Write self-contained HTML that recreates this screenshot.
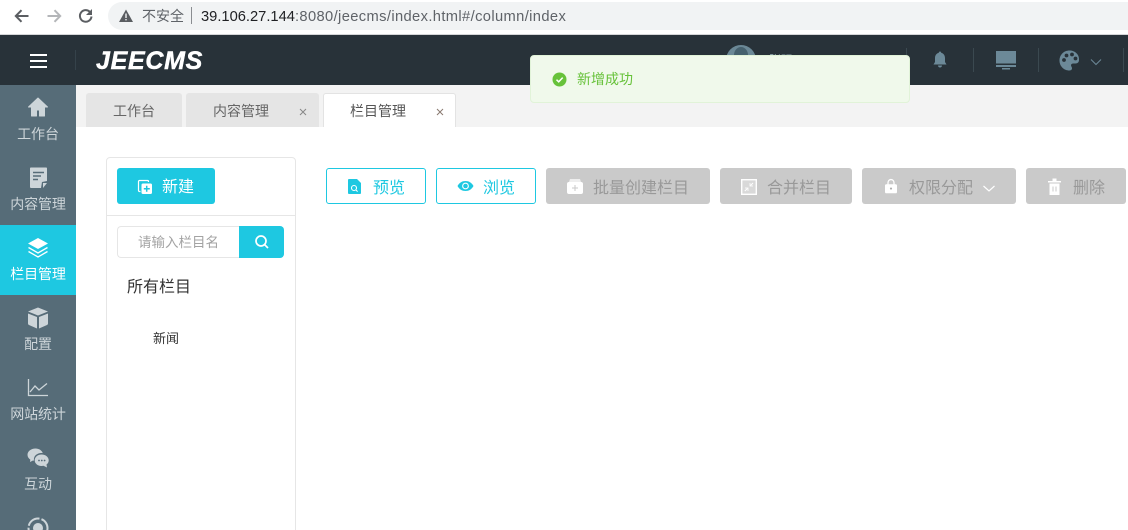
<!DOCTYPE html>
<html lang="zh">
<head>
<meta charset="utf-8">
<style>
html,body{margin:0;padding:0;width:1128px;height:530px;overflow:hidden;background:#fff}
body{position:relative;font-family:"Liberation Sans","Noto Sans CJK SC",sans-serif}
.a{position:absolute}
.t{position:absolute;white-space:nowrap;line-height:20px}
svg{position:absolute;display:block}
.nav{position:absolute;left:0;width:76px;height:70px;text-align:center}
.nav span{position:absolute;left:0;width:76px;top:40px;font-size:14px;line-height:18px;color:#cdd5d9;letter-spacing:-.1px}
.tab{position:absolute;top:93px;height:34px;background:#e5e5e5;border-radius:3px 3px 0 0;font-size:14px;color:#666}
.btn{position:absolute;top:168px;height:36px;box-sizing:border-box;border-radius:3px;font-size:16px;line-height:36px;white-space:nowrap}
.o{border:1px solid #1ec8e1;color:#1ec8e1;line-height:34px;background:#fff}
.d{background:#cacaca;color:#999}
.sep{position:absolute;top:48px;width:1px;height:24px;background:#3b4950}
</style>
</head>
<body>
<!-- browser chrome -->
<div class="a" style="left:0;top:0;width:1128px;height:34px;background:#fff;border-bottom:1px solid #d5d6d8"></div>
<svg style="left:12px;top:6px" width="20" height="20" viewBox="0 0 20 20"><path d="M16.500 10H4M9.500 4.200 3.800 10l5.700 5.800" fill="none" stroke="#5b5e62" stroke-width="2"/></svg>
<svg style="left:44px;top:6px" width="20" height="20" viewBox="0 0 20 20"><path d="M3.500 10H16M10.500 4.200 16.200 10l-5.700 5.800" fill="none" stroke="#b4b6b9" stroke-width="2"/></svg>
<svg style="left:76px;top:6px" width="20" height="20" viewBox="0 0 20 20"><path d="M15.500 10.500A5.800 5.800 0 1 1 13.800 5.800" fill="none" stroke="#5b5e62" stroke-width="2"/><path d="M16 3v6h-6z" fill="#5b5e62"/></svg>
<div class="a" style="left:108px;top:2px;width:1040px;height:28px;border-radius:14px;background:#f1f3f4"></div>
<svg style="left:118px;top:8px" width="16" height="15" viewBox="0 0 16 15"><path d="M8 1.500 15 14H1z" fill="#5a5d61"/><path d="M7.300 5.500h1.400v4.500H7.300zM7.300 11h1.400v1.400H7.300z" fill="#f1f3f4"/></svg>
<div class="t" style="left:142px;top:6px;font-size:14px;color:#5f6368">不安全</div>
<div class="a" style="left:191px;top:7px;width:1px;height:17px;background:#8a8d91"></div>
<div class="t" style="left:201px;top:7px;font-size:14.700px;color:#5f6368"><span style="color:#202124">39.106.27.144</span><span style="letter-spacing:.38px">:8080/jeecms/index.html#/column/index</span></div>

<!-- app header -->
<div class="a" style="left:0;top:35px;width:1128px;height:50px;background:#283239"></div>
<div class="a" style="left:30px;top:54px;width:17px;height:2px;background:#fff"></div>
<div class="a" style="left:30px;top:60px;width:17px;height:2px;background:#fff"></div>
<div class="a" style="left:30px;top:66px;width:17px;height:2px;background:#fff"></div>
<div class="a" style="left:75px;top:50px;width:1px;height:20px;background:#35424a"></div>
<div class="t" style="left:96px;top:49px;font-size:25px;line-height:25px;font-weight:bold;font-style:italic;color:#fff;letter-spacing:.7px;-webkit-text-stroke:.5px #fff">JEECMS</div>
<div class="a" style="left:726px;top:45px;width:30px;height:30px;border-radius:50%;background:#6b8896"></div>
<div class="a" style="left:734px;top:47px;width:14px;height:16px;border-radius:50%;background:#46616e"></div>
<div class="t" style="left:769px;top:50px;font-size:12px;color:#8aa0ab">张强</div>
<div class="sep" style="left:906px"></div>
<div class="sep" style="left:973px"></div>
<div class="sep" style="left:1038px"></div>
<div class="sep" style="left:1123px"></div>
<svg style="left:932px;top:51px" width="16" height="18" viewBox="0 0 16 18"><path d="M8 .500c.8 0 1.200.5 1.200 1.200C11.800 2.400 13 4.500 13 7v4l1.500 2.500h-13L3 11V7c0-2.500 1.200-4.600 3.800-5.300C6.800 1 7.200.5 8 .500zM6 14.500h4c0 1.200-1 2-2 2s-2-.8-2-2z" fill="#6c8998"/></svg>
<svg style="left:995px;top:50px" width="22" height="20" viewBox="0 0 22 20"><path d="M1 1h20v12.500H1zM1 15h20v2H1zM7 18h8v1.500H7z" fill="#6c8998"/></svg>
<svg style="left:1059px;top:50px" width="21" height="21" viewBox="0 0 21 21"><path d="M10.500.500C4.800.500.500 4.800.500 10.500s4.300 10 10 10c1.800 0 2.500-1 2.500-2.200 0-1.300-1-1.800-1-3 0-1.100 1-1.800 2.300-1.800h2.200c2.300 0 3.500-1.600 3.500-3.500C20.500 4.500 16 .500 10.500.500z" fill="#6c8998"/><circle cx="5" cy="10" r="1.900" fill="#283239"/><circle cx="7.500" cy="5.500" r="1.900" fill="#283239"/><circle cx="13" cy="4.500" r="1.900" fill="#283239"/><circle cx="16.500" cy="8.500" r="1.900" fill="#283239"/></svg>
<svg style="left:1090px;top:58px" width="12" height="8" viewBox="0 0 12 8"><path d="M1 1.500 6 6.500l5-5" fill="none" stroke="#6c8998" stroke-width="1"/></svg>

<!-- sidebar -->
<div class="a" style="left:0;top:85px;width:76px;height:445px;background:#566c78"></div>
<div class="nav" style="top:85px">
<svg style="left:27px;top:12px" width="22" height="20" viewBox="0 0 22 20"><path d="M11 1 1.500 10H4.500v9h5v-6h3v6h5v-9h3z" fill="#cdd5d9" stroke="#cdd5d9" stroke-linejoin="round"/></svg>
<span>工作台</span></div>
<div class="nav" style="top:155px">
<svg style="left:29px;top:12px" width="19" height="22" viewBox="0 0 19 22"><path d="M1 1.500C1 .800 1.500.500 2 .500h15c.5 0 1 .3 1 1V14l-5 1-1 6H2c-.5 0-1-.4-1-1z" fill="#cdd5d9"/><path d="M4 5.500h11M4 9h8M4 12.500h5" stroke="#566c78" stroke-width="1.500"/><path d="M14 16h4l-4 5z" fill="#cdd5d9"/></svg>
<span>内容管理</span></div>
<div class="nav" style="top:225px;background:#1ec8e1">
<svg style="left:27px;top:12px" width="22" height="22" viewBox="0 0 22 22"><path d="M11 1 21 6.500 11 12 1 6.500z" fill="#fff"/><path d="M1.500 10.500 11 16l9.500-5.500M1.500 14.500 11 20l9.500-5.500" fill="none" stroke="#fff" stroke-width="1.300"/></svg>
<span style="color:#fff">栏目管理</span></div>
<div class="nav" style="top:295px">
<svg style="left:27px;top:12px" width="22" height="22" viewBox="0 0 22 22"><path d="M11 .500 21 4.500 11 8.500 1 4.500z" fill="#cdd5d9"/><path d="M1 6.500 10 10v11.500L2 18c-.6-.3-1-.8-1-1.500zM21 6.500 12 10v11.500l8-3.500c.6-.3 1-.8 1-1.500z" fill="#cdd5d9"/></svg>
<span>配置</span></div>
<div class="nav" style="top:365px">
<svg style="left:27px;top:14px" width="22" height="18" viewBox="0 0 22 18"><path d="M1.500 0v16.500H21M3 13l5-6 4 4 8-6.500" fill="none" stroke="#cdd5d9" stroke-width="1.300"/></svg>
<span>网站统计</span></div>
<div class="nav" style="top:435px">
<svg style="left:27px;top:13px" width="22" height="20" viewBox="0 0 22 20"><path d="M8.500 0.500C4 .500.500 3.300.500 6.800c0 2 1.100 3.700 2.800 4.800L3 14l3-1.500c.3 0 .6.100 1 .2C6.200 8.500 9.500 5 14.500 5c.5 0 1 0 1.300.1C14.800 2.400 12 .500 8.500.500z" fill="#cdd5d9"/><path d="M14.500 6.500c-4 0-6.800 2.700-6.800 5.800s2.800 5.700 6.800 5.700c.7 0 1.400-.1 2-.2l3.500 1.700-.5-3c1.500-1 2.200-2.500 2.200-4.200 0-3.100-3-5.800-7-5.800z" fill="#cdd5d9"/><circle cx="12" cy="12.500" r=".9" fill="#566c78"/><circle cx="14.800" cy="12.500" r=".9" fill="#566c78"/><circle cx="17.600" cy="12.500" r=".9" fill="#566c78"/></svg>
<span>互动</span></div>
<svg style="left:27px;top:517px" width="22" height="13" viewBox="0 0 22 13"><circle cx="11" cy="11" r="9.500" fill="none" stroke="#cdd5d9" stroke-width="2" stroke-dasharray="14 2"/><circle cx="11" cy="11" r="5" fill="#cdd5d9"/></svg>

<!-- content bg & tabs -->
<div class="a" style="left:76px;top:85px;width:1052px;height:42px;background:#f3f3f3"></div>
<div class="tab" style="left:86px;width:96px"><div class="t" style="left:27px;top:8px">工作台</div></div>
<div class="tab" style="left:186px;width:133px"><div class="t" style="left:27px;top:8px">内容管理</div><svg style="left:113px;top:15px" width="8" height="8" viewBox="0 0 8 8"><path d="M1 1l6 6M7 1 1 7" stroke="#888" stroke-width="1"/></svg></div>
<div class="tab" style="left:323px;width:133px;height:34px;box-sizing:border-box;background:#fff;border:1px solid #e3e3e3;border-bottom:0"><div class="t" style="left:26px;top:7px;color:#555">栏目管理</div><svg style="left:112px;top:14px" width="8" height="8" viewBox="0 0 8 8"><path d="M1 1l6 6M7 1 1 7" stroke="#8a7a70" stroke-width="1"/></svg></div>

<!-- tree panel -->
<div class="a" style="left:106px;top:157px;width:190px;height:380px;box-sizing:border-box;border:1px solid #e6e6e6;border-radius:4px;background:#fff"></div>
<div class="a" style="left:107px;top:215px;width:188px;height:1px;background:#e6e6e6"></div>
<div class="btn" style="left:117px;width:98px;background:#1ec8e1;color:#fff"><span class="t" style="left:45px;top:10px;font-size:16px">新建</span>
<svg style="left:20px;top:11px" width="16" height="16" viewBox="0 0 16 16"><path d="M3.500 12.500h-1a1 1 0 0 1-1-1V2.500a1 1 0 0 1 1-1h8a1 1 0 0 1 1 1v.500" fill="none" stroke="#fff" stroke-width="1.200"/><rect x="4.500" y="4.500" width="10.500" height="10.500" rx="1.500" fill="#fff"/><path d="M9.700 6.800v6M6.800 9.800h6" stroke="#1ec8e1" stroke-width="1.500"/></svg></div>
<div class="a" style="left:117px;top:226px;width:123px;height:32px;box-sizing:border-box;border:1px solid #e6e6e6;border-right:0;border-radius:4px 0 0 4px;background:#fff"></div>
<div class="t" style="left:138px;top:233px;font-size:13.500px;color:#a3a3a3">请输入栏目名</div>
<div class="a" style="left:239px;top:226px;width:45px;height:32px;background:#1ec8e1;border-radius:0 4px 4px 0"></div>
<svg style="left:254px;top:234px" width="16" height="16" viewBox="0 0 16 16"><circle cx="7" cy="7" r="5" fill="none" stroke="#fff" stroke-width="1.700"/><path d="M10.800 10.800 14 14" stroke="#fff" stroke-width="1.700"/></svg>
<div class="t" style="left:127px;top:278px;font-size:16px;color:#333">所有栏目</div>
<div class="t" style="left:153px;top:329px;font-size:13px;color:#333">新闻</div>

<!-- action buttons -->
<div class="btn o" style="left:326px;width:100px"><span class="t" style="left:46px;top:10px">预览</span>
<svg style="left:21px;top:10px" width="13" height="15" viewBox="0 0 13 15"><path d="M1 0h8l4 4v10a1 1 0 0 1-1 1H1a1 1 0 0 1-1-1V1a1 1 0 0 1 1-1z" fill="#1ec8e1"/><circle cx="6" cy="9" r="2.500" fill="none" stroke="#fff" stroke-width="1.100"/><path d="M8 11l1.600 1.600" stroke="#fff" stroke-width="1.100"/></svg></div>
<div class="btn o" style="left:436px;width:100px"><span class="t" style="left:46px;top:10px">浏览</span>
<svg style="left:20px;top:11px" width="17" height="12" viewBox="0 0 17 12"><path d="M.500 6C2.500 2.500 5.200 1 8.500 1s6 1.500 8 5c-2 3.500-4.700 5-8 5s-6-1.500-8-5z" fill="#1ec8e1"/><circle cx="8.500" cy="6" r="3.400" fill="#fff"/><circle cx="8.500" cy="6" r="2.300" fill="#1ec8e1"/></svg></div>
<div class="btn d" style="left:546px;width:164px"><span class="t" style="left:47px;top:11px">批量创建栏目</span>
<svg style="left:21px;top:11px" width="16" height="15" viewBox="0 0 16 15"><path d="M3 0h10l1 3H2z" fill="#eee"/><rect y="3" width="16" height="12" rx="2" fill="#fff"/><path d="M8 6v6M5 9h6" stroke="#cacaca"/></svg></div>
<div class="btn d" style="left:720px;width:132px"><span class="t" style="left:47px;top:11px">合并栏目</span>
<svg style="left:21px;top:11px" width="16" height="16" viewBox="0 0 16 16"><rect x=".7" y=".7" width="14.600" height="14.600" fill="#d9d9d9" stroke="#fff" stroke-width="1.400"/><path d="M12 4 9.500 6.500M3.800 12 6.500 9.500" stroke="#fff"/><path d="M9 4v3h3M4 9h3v3" fill="none" stroke="#fff" stroke-width=".8"/></svg></div>
<div class="btn d" style="left:862px;width:154px"><span class="t" style="left:47px;top:11px">权限分配</span>
<svg style="left:23px;top:10px" width="12" height="16" viewBox="0 0 14 17"><path d="M3.500 7V4.500a3.500 3.500 0 0 1 7 0V7" fill="none" stroke="#fff" stroke-width="1.500"/><rect y="6.500" width="14" height="10.500" rx="1.500" fill="#fff"/><circle cx="7" cy="11.500" r="1.200" fill="#aaa"/></svg>
<svg style="left:121px;top:17px" width="12" height="7" viewBox="0 0 12 7"><path d="M.5 1 6 6l5.500-5" fill="none" stroke="#fff" stroke-width="1.200"/></svg></div>
<div class="btn d" style="left:1026px;width:100px"><span class="t" style="left:47px;top:11px;font-size:16px">删除</span>
<svg style="left:22px;top:10px" width="13" height="17" viewBox="0 0 13 17"><path d="M0 3h13v1.500H0zM4.500 .500h4V3h-4zM1.500 5.500h10V17h-10z" fill="#fff"/><path d="M5 8.500v5M8 8.500v5" stroke="#cacaca"/></svg></div>

<!-- toast -->
<div class="a" style="left:530px;top:55px;width:380px;height:48px;box-sizing:border-box;background:#f0f9eb;border:1px solid #e1f3d8;border-radius:4px"></div>
<svg style="left:552px;top:72px" width="15" height="15" viewBox="0 0 15 15"><circle cx="7.500" cy="7.500" r="7" fill="#67c23a"/><path d="M4.500 7.700 6.700 9.800 10.700 5.600" fill="none" stroke="#fff" stroke-width="1.500"/></svg>
<div class="t" style="left:577px;top:69px;font-size:14px;color:#67c23a">新增成功</div>
</body>
</html>
